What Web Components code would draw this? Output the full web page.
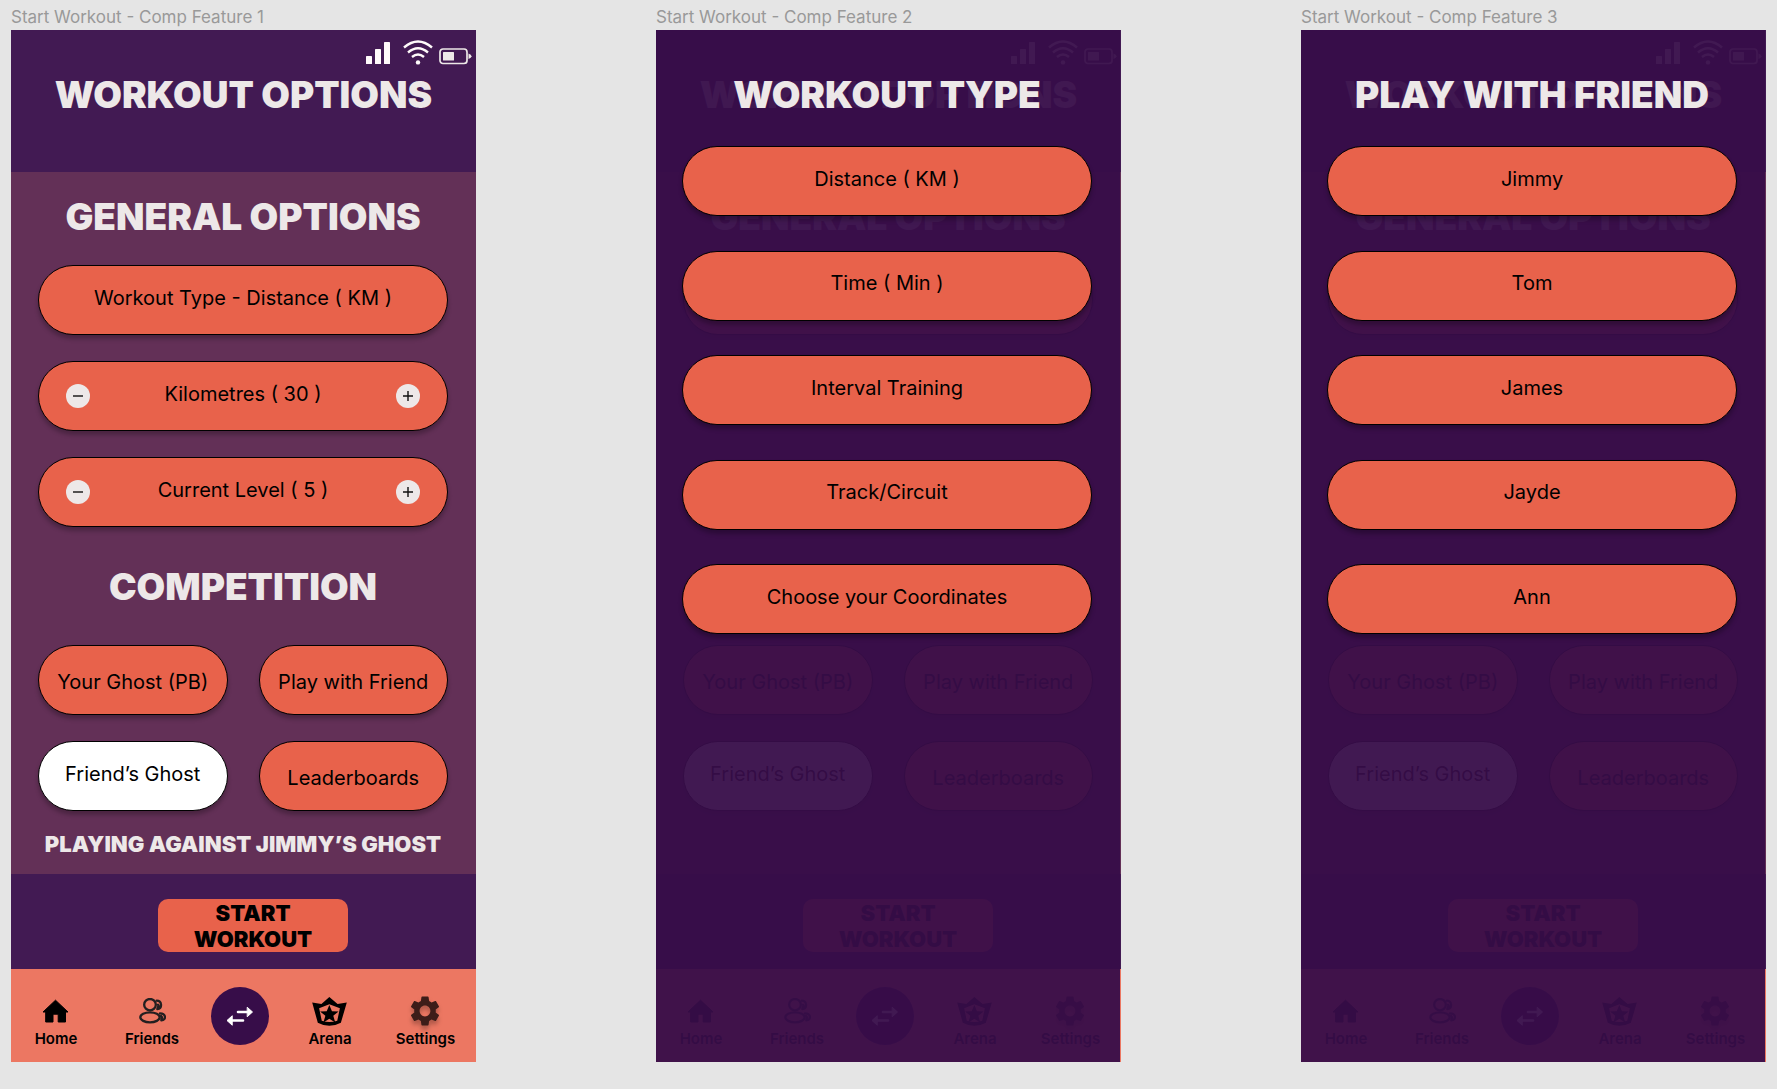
<!DOCTYPE html>
<html lang="en">
<head>
<meta charset="utf-8">
<title>Start Workout - Comp Feature</title>
<style>
  :root {
    --ink: #ede8e8;
    --coral: #e8624b;
    --plum: #421a53;
    --mauve: #633057;
    --night: #370d49;
  }
  body {
    margin: 0;
    background: #e5e5e5;
    font-family: Inter, "Liberation Sans", sans-serif;
  }
  main {
    display: grid;
    grid-template-columns: repeat(3, 1fr);
    gap: 180px;
    padding: 0 11px;
  }
</style>
</head>
<body>
<main>
  <phone-frame label="Start Workout - Comp Feature 1">
    <workout-screen>
      <pill-button slot="general">Workout Type - Distance ( KM )</pill-button>
      <pill-stepper slot="general" name="Kilometres">Kilometres ( 30 )</pill-stepper>
      <pill-stepper slot="general" name="Current Level">Current Level ( 5 )</pill-stepper>
      <span slot="note">PLAYING AGAINST JIMMY’S GHOST</span>
    </workout-screen>
  </phone-frame>

  <phone-frame label="Start Workout - Comp Feature 2">
    <workout-screen inert>
      <pill-button slot="general"></pill-button>
    </workout-screen>
    <choice-sheet slot="sheet" heading="WORKOUT TYPE">
      <pill-button>Distance ( KM )</pill-button>
      <pill-button>Time ( Min )</pill-button>
      <pill-button>Interval Training</pill-button>
      <pill-button>Track/Circuit</pill-button>
      <pill-button>Choose your Coordinates</pill-button>
    </choice-sheet>
  </phone-frame>

  <phone-frame label="Start Workout - Comp Feature 3">
    <workout-screen inert>
      <pill-button slot="general"></pill-button>
    </workout-screen>
    <choice-sheet slot="sheet" heading="PLAY WITH FRIEND">
      <pill-button>Jimmy</pill-button>
      <pill-button>Tom</pill-button>
      <pill-button>James</pill-button>
      <pill-button>Jayde</pill-button>
      <pill-button>Ann</pill-button>
    </choice-sheet>
  </phone-frame>
</main>

<script>
const define = (name, render) => customElements.define(name, class extends HTMLElement {
  constructor() {
    super();
    this.attachShadow({ mode: 'open' });
  }
  connectedCallback() {
    this.shadowRoot.innerHTML = '<style>*{box-sizing:border-box}</style>' + render(this);
  }
});

const headingStyle = `
  h2 { margin: 0; font-size: 37px; line-height: 44px; font-weight: 900; text-align: center; white-space: nowrap; color: var(--ink); }
`;

/* Labelled artboard; a sheet may cover the screen */
define('phone-frame', el => `
  <style>
    :host { display: block; min-width: 0; }
    .label { margin: 0; padding: 6px 0 2px; font-size: 17px; line-height: 22px; color: #999; white-space: nowrap; }
    .screen { position: relative; }
    ::slotted([slot=sheet]) { position: absolute; inset: 0 1px 0 0; }
  </style>
  <p class="label">${el.getAttribute('label')}</p>
  <div class="screen"><slot></slot><slot name="sheet"></slot></div>
`);

define('status-bar', () => `
  <style>
    :host { display: flex; justify-content: flex-end; align-items: flex-end; height: 25px; padding-right: 4px; }
    svg { display: block; }
    .signal { margin-right: 12px; }
    .wifi { margin-right: 6px; }
  </style>
  <svg class="signal" width="25" height="24" viewBox="0 0 25 24" fill="#fffafa" aria-hidden="true">
    <rect x="0" y="15" width="6" height="8" rx=".6"/><rect x="9" y="8" width="6" height="15" rx=".6"/><rect x="18" y="1" width="6" height="22" rx=".6"/>
  </svg>
  <svg class="wifi" width="30" height="25" viewBox="0 0 30 25" fill="none" stroke="#fffafa" stroke-width="2.4" aria-hidden="true">
    <path d="M1 7.5Q15-4.5 29 7.500M5 12.500Q15 4 25 12.500M9 17Q15 12 21 17"/><circle cx="15" cy="22.400" r="2.200" fill="#fffafa" stroke="none"/>
  </svg>
  <svg width="33" height="17" viewBox="0 0 33 17" aria-hidden="true">
    <rect x="1" y="1" width="27" height="14.500" rx="3" fill="none" stroke="#ede8e8" stroke-width="1.700"/>
    <rect x="4" y="4" width="11" height="8.500" rx=".5" fill="#ede8e8"/><path d="M29.500 5.500Q32.500 6.500 32.500 8.300T29.500 11z" fill="#ede8e8"/>
  </svg>
`);

define('pill-button', () => `
  <style>
    :host { display: block; }
    button {
      display: block; width: 100%; height: 70px; padding: 0 0 5px;
      border: 1px solid #000; border-radius: 35px;
      background: var(--coral); color: #000;
      box-shadow: 0 4px 4px rgba(0,0,0,.25);
      font: 400 20px/24px Inter, "Liberation Sans", sans-serif; white-space: nowrap; text-align: center;
    }
    :host([low]) button { padding: 4px 0 0; }
    :host([selected]) button { background: #fff; }
  </style>
  <button type="button"><slot></slot></button>
`);

define('pill-stepper', el => `
  <style>
    :host { display: block; }
    div {
      display: flex; align-items: center; justify-content: space-between;
      height: 70px; padding: 0 27px;
      border: 1px solid #000; border-radius: 35px;
      background: var(--coral); color: #000;
      box-shadow: 0 4px 4px rgba(0,0,0,.25);
    }
    span { padding-bottom: 5px; font-size: 20px; line-height: 24px; white-space: nowrap; }
    button { width: 24px; height: 24px; padding: 0; border: 0; border-radius: 50%; background: var(--ink); }
    svg { display: block; }
  </style>
  <div role="group" aria-label="${el.getAttribute('name')}">
    <button type="button" aria-label="Decrease"><svg width="24" height="24" stroke="#111" stroke-width="1.400"><path d="M7 12h10"/></svg></button>
    <span><slot></slot></span>
    <button type="button" aria-label="Increase"><svg width="24" height="24" stroke="#111" stroke-width="1.400"><path d="M7 12h10M12 7v10"/></svg></button>
  </div>
`);

const icons = {
  home: `<svg width="27" height="24" viewBox="0 0 27 24"><path d="M13.500 1.200L26 13H23.500V23H16.200V15.200H11V23H3.700V13H1z" stroke="#000" stroke-linejoin="round"/></svg>`,
  friends: `<svg width="27" height="26" viewBox="0 0 81 78" fill="none" stroke="#231f20" stroke-width="7" stroke-linecap="round">
    <ellipse cx="33" cy="20" rx="17.500" ry="17"/><ellipse cx="33" cy="58" rx="29" ry="15"/>
    <path d="M53 8C69 8 71 31 55 33M57 20Q60 24 56 29M63 46C80 46 84 65 67 67M66 54Q71 58 67 63"/></svg>`,
  arena: `<svg width="35" height="29" viewBox="0 0 105 88"><path fill-rule="evenodd" d="M0 17L28 21L52 0L77 21L105 17L87 78Q52 97 17 78zM21 34L29 72Q52 80 76 72L84 34L52 22z"/>
    <path d="M52 24L60 43L80 44L64 57L70 77L52 66L34 77L40 57L24 44L44 43z"/></svg>`,
  settings: `<svg width="30" height="30" viewBox="2 2 20 20" fill="#3d1d19" style="filter:drop-shadow(0 4px 2px rgba(0,0,0,.25))"><path d="M19.140 12.940c.04-.3.06-.61.06-.94 0-.32-.02-.64-.07-.94l2.030-1.580c.18-.14.23-.41.12-.61l-1.920-3.320c-.12-.22-.37-.29-.59-.22l-2.390.96c-.5-.38-1.030-.7-1.620-.94l-.36-2.540c-.04-.24-.24-.41-.48-.41h-3.840c-.24 0-.43.17-.47.41l-.36 2.540c-.59.24-1.130.57-1.620.94l-2.390-.96c-.22-.08-.47 0-.59.22L2.740 8.870c-.12.21-.08.47.12.61l2.030 1.580c-.05.3-.09.63-.09.94s.02.64.07.94l-2.030 1.580c-.18.14-.23.41-.12.61l1.920 3.320c.12.22.37.29.59.22l2.390-.96c.5.38 1.030.7 1.620.94l.36 2.540c.05.24.24.41.48.41h3.840c.24 0 .44-.17.47-.41l.36-2.540c.59-.24 1.130-.56 1.620-.94l2.390.96c.22.08.47 0 .59-.22l1.920-3.320c.12-.22.07-.47-.12-.61l-2.010-1.580zM12 15.600c-1.980 0-3.600-1.620-3.600-3.600s1.620-3.600 3.600-3.600 3.600 1.620 3.600 3.600-1.620 3.600-3.600 3.600z"/></svg>`
};

define('nav-item', el => `
  <style>
    :host { display: block; }
    a { display: flex; flex-direction: column; align-items: center; color: #000; text-decoration: none; font-size: 15px; line-height: 18px; font-weight: 600; }
    i { display: flex; align-items: center; height: 30px; margin-bottom: 4px; }
    svg { display: block; }
  </style>
  <a href="#"><i>${icons[el.getAttribute('icon')]}</i><slot></slot></a>
`);

define('bottom-nav', () => `
  <style>
    nav {
      display: grid; grid-template-columns: 90fr 102fr 74fr 106fr 85fr 8fr;
      align-items: start; justify-items: center;
      height: 93px; padding-top: 18px; background: #ec7762;
    }
    nav-item { padding-top: 9px; }
    button { display: grid; place-items: center; width: 58px; height: 58px; padding: 0; border: 0; border-radius: 50%; background: var(--night); }
  </style>
  <nav aria-label="Main">
    <nav-item icon="home">Home</nav-item>
    <nav-item icon="friends">Friends</nav-item>
    <button type="button" aria-label="Switch"><svg width="28" height="20" viewBox="0 0 28 20" fill="#fff" stroke="#fff" stroke-linecap="round" stroke-linejoin="round">
      <path d="M12 6h10M6 14.500h11" stroke-width="2.600"/><path d="M21.500 1.500L26.500 6L21.500 10.500zM6 10L1 14.500L6 19z"/></svg></button>
    <nav-item icon="arena">Arena</nav-item>
    <nav-item icon="settings">Settings</nav-item>
  </nav>
`);

define('workout-screen', () => `
  <style>
    :host { display: block; }
    ${headingStyle}
    :host([inert]) .covered { visibility: hidden; }
    header { min-height: 142px; padding-top: 10px; background: var(--plum); }
    status-bar { margin-bottom: 8px; }
    .options { min-height: 702px; padding: 23px 28px 17px 27px; background: var(--mauve); }
    .general { display: flex; flex-direction: column; gap: 26px; min-height: 262px; margin: 26px 0 38px; }
    .modes { display: grid; grid-template-columns: 1fr 1fr; gap: 26px 31px; margin: 36px 0 20px; }
    .note { margin: 0 -20px; font-size: 22px; line-height: 26px; font-weight: 900; text-align: center; color: var(--ink); white-space: nowrap; }
    .cta { display: flex; justify-content: center; min-height: 95px; padding: 25px 0 17px 19px; background: var(--plum); }
    .cta button { width: 190px; height: 53px; padding: 0 30px; border: 0; border-radius: 10px; background: var(--coral); color: #000; font: 900 22px/26px Inter, "Liberation Sans", sans-serif; }
  </style>
  <header>
    <status-bar></status-bar>
    <h2>WORKOUT OPTIONS</h2>
  </header>
  <section class="options">
    <h2>GENERAL OPTIONS</h2>
    <div class="general"><slot name="general"></slot></div>
    <h2 class="covered">COMPETITION</h2>
    <div class="modes">
      <pill-button low>Your Ghost (PB)</pill-button>
      <pill-button low>Play with Friend</pill-button>
      <pill-button selected>Friend’s Ghost</pill-button>
      <pill-button low>Leaderboards</pill-button>
    </div>
    <p class="note"><slot name="note"></slot></p>
  </section>
  <div class="cta"><button type="button">START WORKOUT</button></div>
  <bottom-nav></bottom-nav>
`);

/* Full-height list of choices over the dimmed screen */
define('choice-sheet', el => `
  <style>
    :host { display: block; padding: 43px 28px 0 26px; background: rgba(55,13,73,.95); }
    ${headingStyle}
    .list { display: flex; flex-direction: column; justify-content: space-between; height: 488px; margin-top: 29px; }
  </style>
  <h2>${el.getAttribute('heading')}</h2>
  <div class="list"><slot></slot></div>
`);
</script>
</body>
</html>
